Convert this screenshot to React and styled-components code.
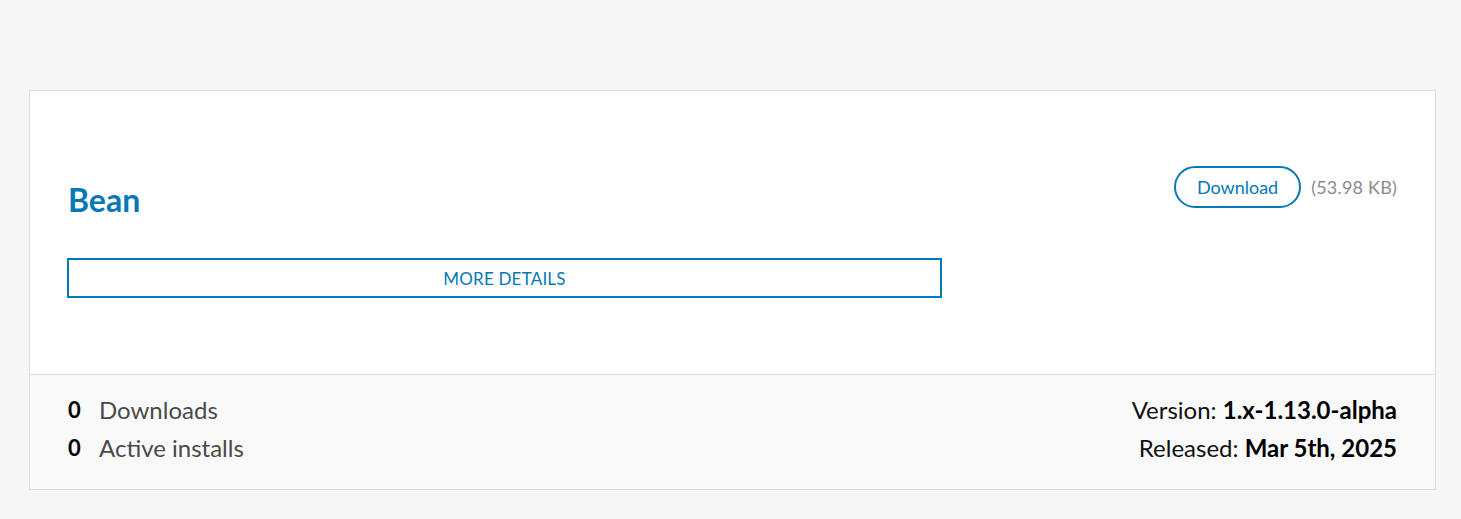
import styled, { createGlobalStyle } from 'styled-components';

const GlobalStyle = createGlobalStyle`
  * {
    box-sizing: border-box;
  }

  body {
    margin: 0;
    background: #f6f6f6;
    font-family: Lato, "Open Sans", sans-serif;
  }
`;

const release = {
  name: 'Bean',
  size: '53.98 KB',
  downloads: 0,
  installs: 0,
  version: '1.x-1.13.0-alpha',
  released: 'Mar 5th, 2025',
};

export default function App() {
  return (
    <>
      <GlobalStyle />
      <Page>
        <Card>
          <CardBody>
            <Main>
              <Title>{release.name}</Title>
              <DetailsButton type="button">More details</DetailsButton>
            </Main>
            <Aside>
              <DownloadButton type="button">Download</DownloadButton>
              <FileSize>({release.size})</FileSize>
            </Aside>
          </CardBody>

          <CardFooter>
            <Stats>
              <StatRow>
                <StatValue>{release.downloads}</StatValue>
                <span>Downloads</span>
              </StatRow>
              <StatRow>
                <StatValue>{release.installs}</StatValue>
                <span>Active installs</span>
              </StatRow>
            </Stats>
            <Meta>
              <MetaRow>
                Version: <strong>{release.version}</strong>
              </MetaRow>
              <MetaRow>
                Released: <strong>{release.released}</strong>
              </MetaRow>
            </Meta>
          </CardFooter>
        </Card>
      </Page>
    </>
  );
}

const Page = styled.div`
  padding: 90px 25px 29px 29px;
`;

const Card = styled.article`
  width: 1407px;
  border: 1px solid #dcdcdc;
  background: #fff;
`;

const CardBody = styled.div`
  display: flex;
  justify-content: space-between;
  align-items: flex-start;
  padding: 75px 38px 76px 37px;
`;

const Main = styled.div`
  display: flex;
  flex-direction: column;
  width: 875px;
`;

const Title = styled.h2`
  margin: 16px 0 40px 1px;
  font-size: 32px;
  line-height: 36px;
  font-weight: 700;
  color: #0678b8;
`;

const DetailsButton = styled.button`
  height: 40px;
  border: 2px solid #0678b8;
  background: #fff;
  color: #0678b8;
  font-family: inherit;
  font-size: 17px;
  letter-spacing: 0.2px;
  text-transform: uppercase;
  cursor: pointer;
`;

const Aside = styled.div`
  display: flex;
  align-items: center;
  gap: 10px;
`;

const DownloadButton = styled.button`
  height: 42px;
  padding: 0 21px;
  border: 2px solid #0678b8;
  border-radius: 21px;
  background: #fff;
  color: #0678b8;
  font-family: inherit;
  font-size: 18px;
  cursor: pointer;
`;

const FileSize = styled.span`
  font-size: 18px;
  letter-spacing: 0.2px;
  color: #8a8a8a;
`;

const CardFooter = styled.footer`
  display: flex;
  justify-content: space-between;
  padding: 16px 38px 22px;
  border-top: 1px solid #dcdcdc;
  background: #f9f9f9;
  font-size: 24px;
  line-height: 38px;
`;

const Stats = styled.div`
  display: flex;
  flex-direction: column;
  color: #4a4a4a;
`;

const StatRow = styled.div`
  display: flex;
`;

const StatValue = styled.strong`
  width: 31px;
  font-size: 22px;
  color: #000;
  font-weight: 700;
`;

const Meta = styled.div`
  display: flex;
  flex-direction: column;
  align-items: flex-end;
  color: #111;
`;

const MetaRow = styled.div`
  strong {
    font-weight: 700;
    color: #000;
  }
`;
